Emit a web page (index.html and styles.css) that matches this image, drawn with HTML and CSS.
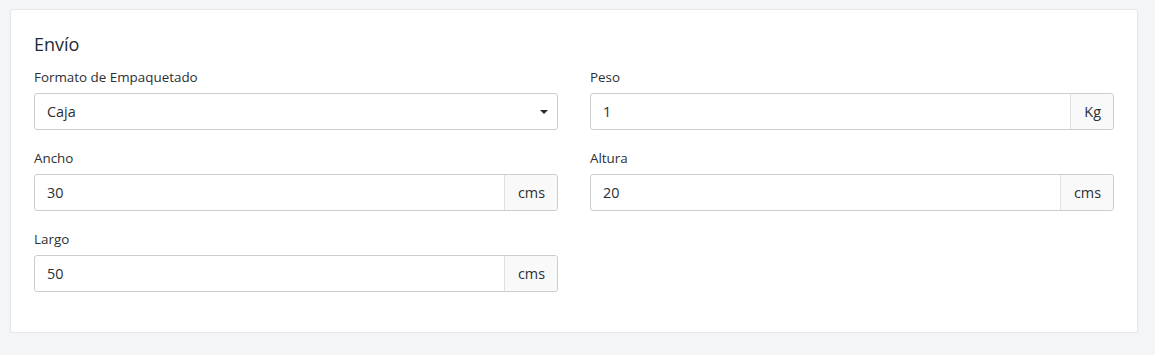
FILE: index.html
```html
<!DOCTYPE html>
<html lang="es">
<head>
<meta charset="utf-8">
<title>Envío</title>
<link rel="stylesheet" href="styles.css">
</head>
<body>
<div class="page">
  <section class="card">
    <h2 class="card-title">Envío</h2>
    <div class="form-grid">
      <div class="field">
        <label class="field-label">Formato de Empaquetado</label>
        <div class="select">
          <span class="select-value">Caja</span>
          <svg class="select-arrow" width="8" height="4" viewBox="0 0 8 4"><path d="M0 0h8L4 4z" fill="#212b36"/></svg>
        </div>
      </div>
      <div class="field">
        <label class="field-label">Peso</label>
        <div class="input-group">
          <span class="input-value">1</span>
          <span class="addon">Kg</span>
        </div>
      </div>
      <div class="field">
        <label class="field-label">Ancho</label>
        <div class="input-group">
          <span class="input-value">30</span>
          <span class="addon">cms</span>
        </div>
      </div>
      <div class="field">
        <label class="field-label">Altura</label>
        <div class="input-group">
          <span class="input-value">20</span>
          <span class="addon">cms</span>
        </div>
      </div>
      <div class="field">
        <label class="field-label">Largo</label>
        <div class="input-group">
          <span class="input-value">50</span>
          <span class="addon">cms</span>
        </div>
      </div>
    </div>
  </section>
</div>
</body>
</html>
```
FILE: styles.css
```css
* { box-sizing: border-box; }
html, body { margin: 0; padding: 0; }
body {
  background: #f4f5f7;
  font-family: "Open Sans", "Liberation Sans", sans-serif;
  color: #333;
}
.page {
  padding: 9px 17px 0 10px;
}
.card {
  background: #fff;
  border: 1px solid #e6e8eb;
  border-radius: 3px;
  box-shadow: 0 1px 2px rgba(0, 0, 0, 0.07);
  padding: 22px 24px 21px 23px;
}
.card-title {
  margin: 0 0 12px;
  font-size: 18px;
  line-height: 24px;
  font-weight: 400;
  color: #212b36;
}
.form-grid {
  display: grid;
  grid-template-columns: 524px 524px;
  column-gap: 32px;
}
.field {
  margin-bottom: 19px;
}
.field-label {
  display: block;
  font-size: 13.4px;
  line-height: 18px;
  margin-bottom: 7px;
  color: #2b2f33;
}
.select, .input-group {
  display: flex;
  align-items: stretch;
  height: 37px;
  border: 1px solid #c9ced3;
  border-radius: 3px;
  background: #fff;
  font-size: 14.4px;
  color: #2b2f33;
}
.select {
  align-items: center;
  justify-content: space-between;
  padding: 0 9px 0 12px;
}
.select-arrow { display: block; }
.input-value {
  flex: 1;
  display: flex;
  align-items: center;
  padding-left: 12px;
}
.addon {
  display: flex;
  align-items: center;
  padding: 0 12px 0 13px;
  background: #f9f9fa;
  border-left: 1px solid #dde0e4;
  border-radius: 0 3px 3px 0;
  color: #2b2f33;
}
```
